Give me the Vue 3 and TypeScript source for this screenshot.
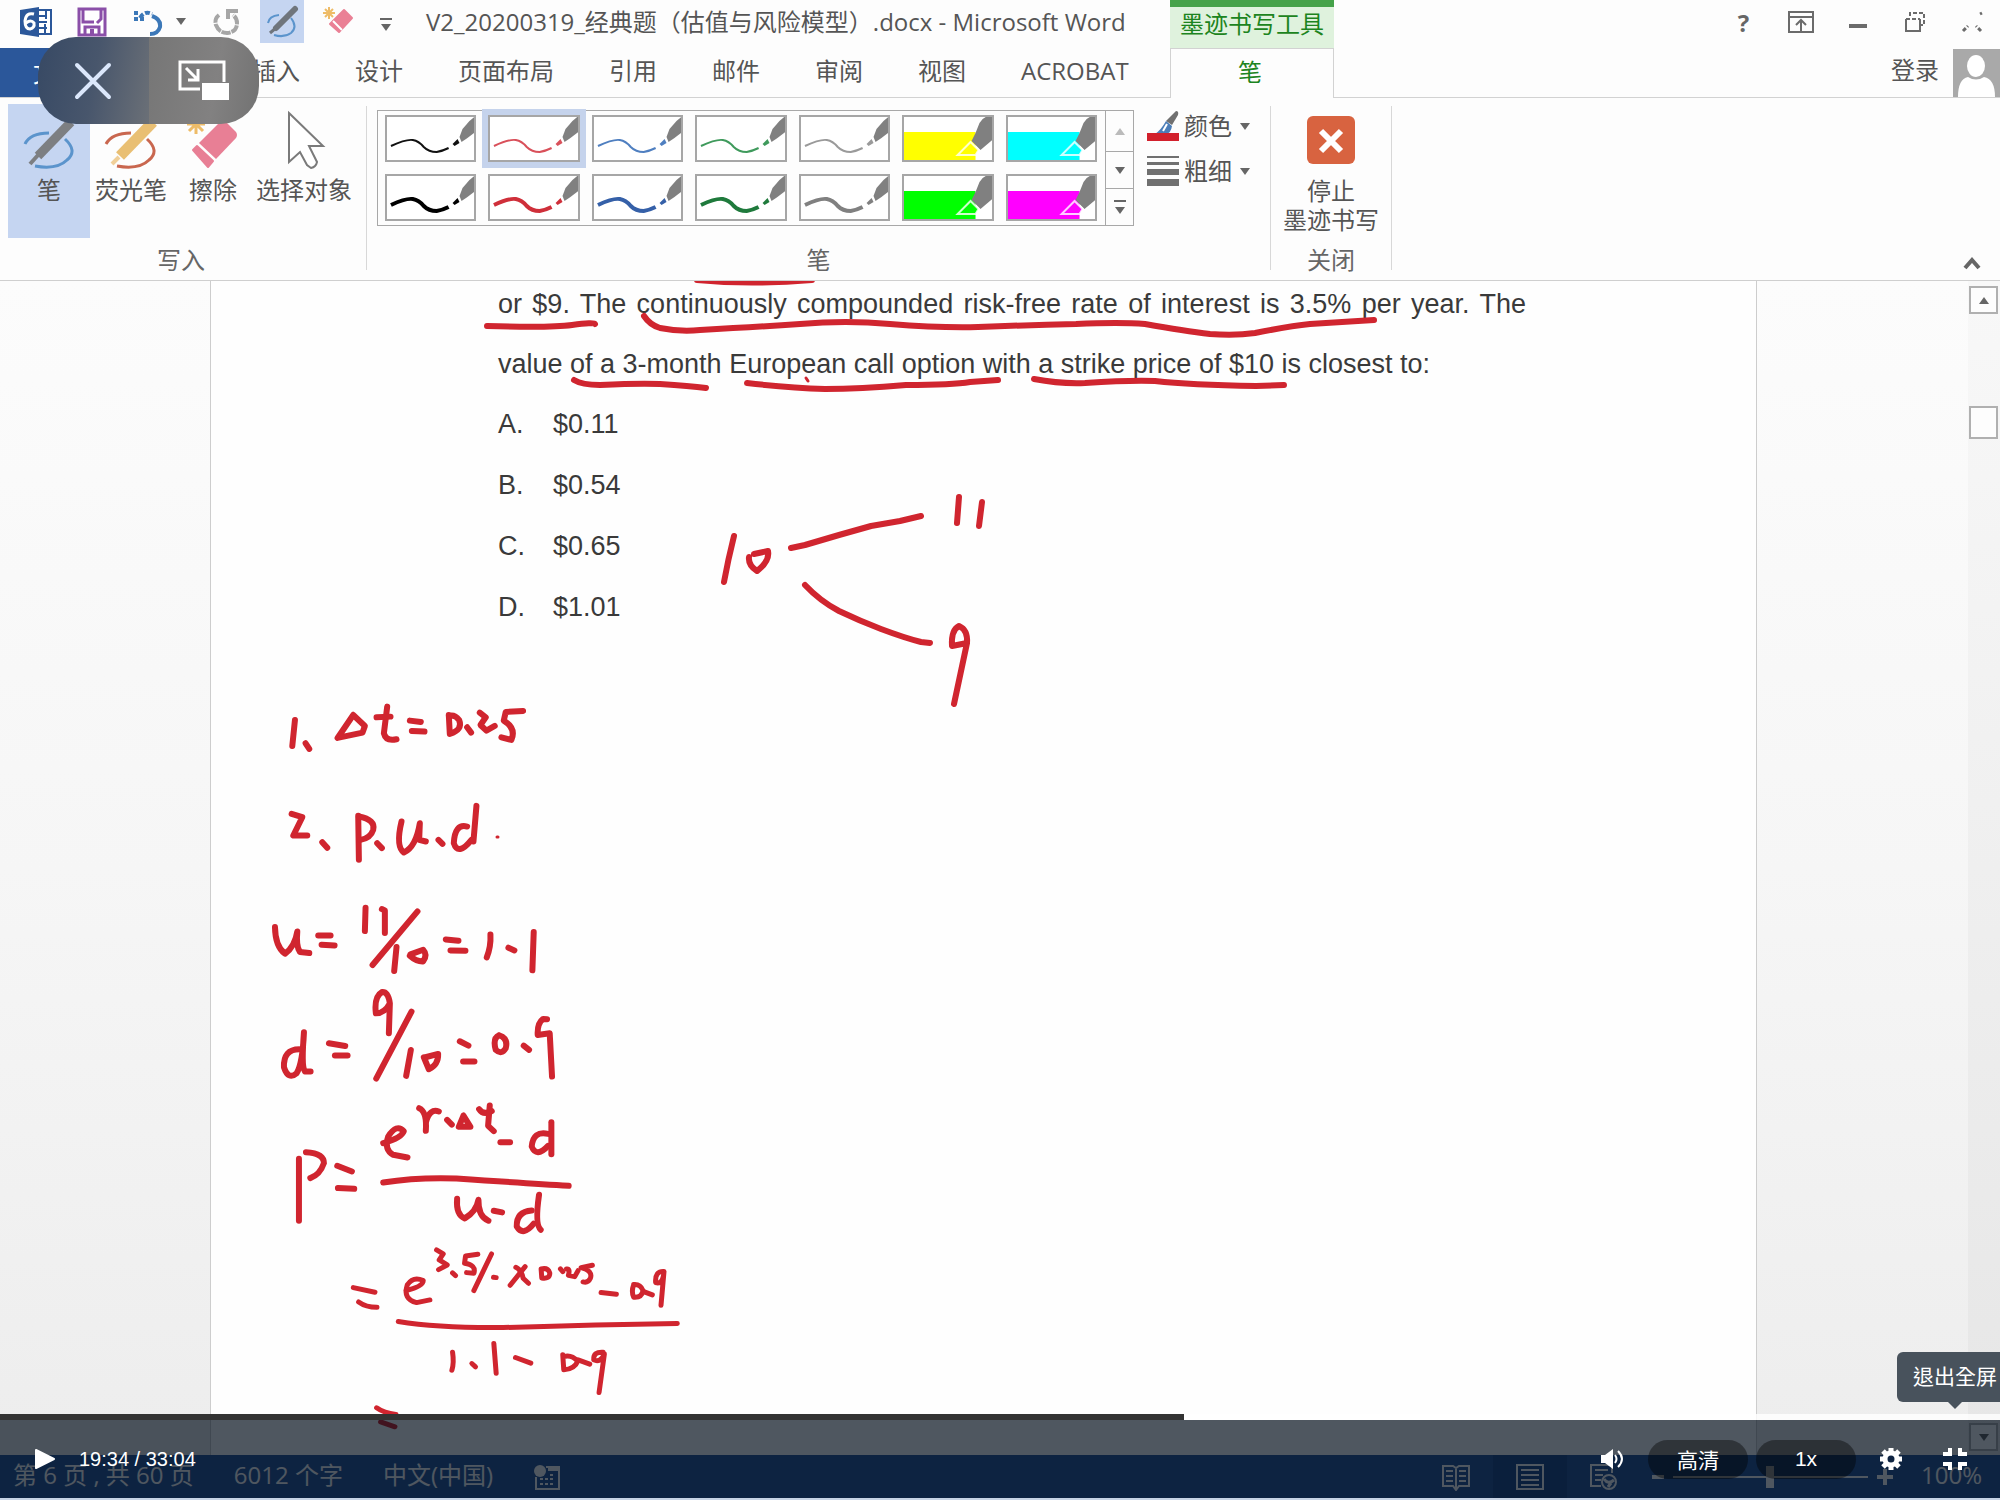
<script setup lang="ts">
import { ref } from 'vue'

interface Swatch { color: string; kind: 'thin' | 'thick' | 'marker' }
interface InkBlock { x: number; y: number; scale: number; width: number; strokes: string[] }

const tabs = ['开始', '插入', '设计', '页面布局', '引用', '邮件', '审阅', '视图', 'ACROBAT']

const swatches: Swatch[] = [
  { color: '#111111', kind: 'thin' },
  { color: '#d9505a', kind: 'thin' },
  { color: '#4f7fc0', kind: 'thin' },
  { color: '#3f9a5c', kind: 'thin' },
  { color: '#9a9a9a', kind: 'thin' },
  { color: '#ffff00', kind: 'marker' },
  { color: '#00ffff', kind: 'marker' },
  { color: '#000000', kind: 'thick' },
  { color: '#cf2f3a', kind: 'thick' },
  { color: '#3560a8', kind: 'thick' },
  { color: '#1f7a3c', kind: 'thick' },
  { color: '#808080', kind: 'thick' },
  { color: '#00ff00', kind: 'marker' },
  { color: '#ff00ff', kind: 'marker' },
]
const selected = ref(1)
const zoom = ref(100)

const options = [
  { key: 'A.', value: '$0.11' },
  { key: 'B.', value: '$0.54' },
  { key: 'C.', value: '$0.65' },
  { key: 'D.', value: '$1.01' },
]

const ink: InkBlock[] = [
  {
    x: 0, y: 0, scale: 1, width: 6,
    strokes: [
      'M697 280Q750 285 812 280',
      'M487 326Q550 328 572 325T595 324',
      'M644 316Q650 325 660 328Q680 332 700 330Q756 327 800 324Q846 320 890 324Q940 328 978 327Q1030 325 1076 324Q1120 322 1145 324Q1185 331 1210 334Q1235 336 1255 333Q1290 326 1310 324L1374 320',
      'M574 380Q582 385 600 385Q640 383 660 384Q690 386 706 388',
      'M747 383Q790 388 825 389Q860 389 906 385Q953 385 970 382L998 380',
      'M1034 379Q1060 384 1085 383Q1130 380 1155 381Q1190 385 1256 386L1284 385',
      'M791 548L805 545L839 535L871 526L900 521L921 516',
      'M805 585Q820 601 839 611Q860 621 881 629Q905 638 921 642L930 643',
      'M959 497L957 523', 'M982 502L979 526',
      'M734 536Q728 560 724 582',
      'M754 554L768 551Q770 561 757 571Q748 565 749 557',
      'M967 643L952 646Q951 630 959 626Q968 630 967 643L954 704',
    ],
  },
  { x: 0, y: 0, scale: 1, width: 3, strokes: ['M806 378L808 381', 'M497 837L498 837'] },
  {
    x: 250, y: 680, scale: 0.333, width: 18,
    strokes: [
      'M135 120L127 198', 'M167 190L178 207',
      'M310 105L263 174L338 158L345 138L310 105',
      'M412 80L402 160Q408 185 440 178', 'M380 112L422 110',
      'M480 122L513 126', 'M486 153L524 155',
      'M597 105L600 162Q640 150 628 120Q615 103 597 108', 'M652 142L664 158',
      'M690 98L708 112L692 135L710 152L735 138',
      'M820 93L768 96L762 122Q800 145 785 180L755 172',
      'M125 402L157 412L130 467L172 467', 'M217 487L232 504',
      'M325 408L327 540', 'M327 410Q378 420 370 450Q362 475 332 480', 'M382 490L396 505',
      'M455 425Q437 500 462 518Q498 502 510 430L508 480L528 485', 'M566 480L578 492',
      'M652 440Q615 430 612 490Q625 530 665 480', 'M680 378L671 485',
      'M75 742Q76 800 105 822Q135 800 142 755Q138 800 150 817L178 820',
      'M205 767L242 767', 'M215 795L254 797',
      'M347 684L345 754', 'M396 688L405 692L405 760', 'M503 695L368 856',
      'M440 802L433 874', 'M480 828Q500 846 520 845Q534 825 520 810L482 824',
      'M588 779L626 783', 'M602 812L647 813',
      'M722 764Q724 800 711 833', 'M776 804L794 812', 'M852 757L848 872',
    ],
  },
  {
    x: 250, y: 970, scale: 0.333, width: 18,
    strokes: [
      'M148 238Q100 238 102 292Q115 332 140 310Q158 280 162 187Q154 290 165 305L182 305',
      'M237 220L286 228', 'M255 257L293 257',
      'M420 100Q415 65 397 66Q372 80 378 130Q404 130 420 100L417 190',
      'M485 125L379 326', 'M483 240L469 318', 'M522 262L537 298Q566 285 565 252L527 262',
      'M630 214L656 227', 'M640 275L674 275',
      'M748 196Q728 205 738 240Q755 256 768 235Q776 205 748 196', 'M822 227L838 240',
      'M892 148L880 147Q862 160 864 195L900 190L907 320',
      'M147 567L147 753', 'M168 547Q222 550 222 580Q210 615 181 625',
      'M262 588L306 605', 'M264 655L313 657',
      'M400 520Q455 505 462 484Q440 460 415 500Q402 540 430 555L473 563',
      'M508 415Q532 425 528 483', 'M529 455Q540 415 567 425', 'M592 450L606 464',
      'M641 437L627 471L662 471Z', 'M688 418Q700 437 726 424', 'M720 407L715 468L732 484',
      'M752 517L781 517',
      'M895 492Q850 482 846 530Q860 565 895 528', 'M905 457L905 553',
      'M400 638Q500 622 620 626Q850 642 957 648',
      'M622 687Q618 735 645 746Q680 725 686 690Q685 740 716 753', 'M732 723L757 728',
      'M846 722Q800 725 801 770Q820 802 852 762', 'M868 675Q855 765 873 780',
    ],
  },
  {
    x: 330, y: 1220, scale: 0.333, width: 15,
    strokes: [
      'M70 203L135 217', 'M86 246Q108 262 141 262',
      'M228 212Q280 200 280 182Q250 168 232 195Q218 238 260 248L300 240',
      'M320 90L340 102L328 120L352 135L326 149', 'M368 159L377 167',
      'M444 103L407 108L404 130Q440 135 432 160L410 158',
      'M485 102L432 212', 'M491 172L499 173',
      'M558 142Q575 150 580 175L596 190', 'M586 140L541 196',
      'M634 147L636 174Q660 178 660 160Q655 142 634 147', 'M692 147L699 155',
      'M710 147Q722 145 716 166L735 170L745 152',
      'M788 136L754 143Q790 152 782 175Q775 190 760 186',
      'M814 218L860 223',
      'M912 194Q904 215 912 232Q936 234 940 212Q932 192 912 194', 'M942 215L968 225',
      'M1003 155Q975 153 978 188Q1000 195 1003 155L994 256',
      'M205 305Q330 325 520 323Q800 315 1043 311',
      'M368 397Q373 430 366 451', 'M426 431L437 441', 'M492 371L499 460',
      'M557 413L603 430',
      'M699 405L702 450Q735 448 744 424Q725 403 702 410', 'M745 420L780 433',
      'M820 397Q790 395 792 420Q812 430 824 402L808 518',
      'M140 564Q162 580 198 584', 'M152 606L195 621',
    ],
  },
]
</script>

<template>
  <main class="player">
    <section class="word">
      <header class="head">
        <div class="quick">
          <button class="q" aria-label="Word">
            <svg width="34" height="32" viewBox="0 0 34 32">
              <path d="M18 4h14v24H18" fill="#fff" stroke="#2b579a" stroke-width="2" />
              <path d="M20 10h8M20 16h8M20 22h8M27 5v8M26 18v9" stroke="#2b579a" stroke-width="2" />
              <path d="M1 4L20 1V31L1 28Z" fill="#2b579a" />
              <path d="M15 8Q7 6 6 15Q6 23 11 23Q16 22 15 17Q12 13 7 17" fill="none" stroke="#fff" stroke-width="3" />
            </svg>
          </button>
          <button class="q" aria-label="保存">
            <svg width="30" height="30" viewBox="0 0 30 30">
              <path d="M2 2H28V28H2Z" fill="#fff" stroke="#8a4fa8" stroke-width="3" />
              <path d="M6 3V15H17M24 3V12L20 16M8 28V20H22V28" fill="none" stroke="#8a4fa8" stroke-width="3" />
              <path d="M13 22h4v6h-4z" fill="#8a4fa8" />
            </svg>
          </button>
          <button class="q" aria-label="撤消">
            <svg width="30" height="30" viewBox="0 0 30 30" fill="none" stroke="#3c78b8" stroke-width="4">
              <path d="M3 4V12H12" stroke-dasharray="4 2" /><path d="M7 11Q12 3 19 7" stroke-dasharray="5 2" />
              <path d="M19 9Q28 12 27 20Q25 27 17 27" />
            </svg>
          </button>
          <button class="more" aria-label="撤消列表"><i class="tri"></i></button>
          <button class="q" aria-label="重复">
            <svg width="30" height="30" viewBox="0 0 30 30" fill="none" stroke="#a6a6a6" stroke-width="4">
              <path d="M8 8Q3 12 5 18Q8 26 16 26Q26 25 26 16Q26 11 22 8" stroke-dasharray="9 1" /><path d="M17 12V4H27" />
            </svg>
          </button>
          <button class="q on" aria-label="笔">
            <svg width="34" height="34" viewBox="0 0 34 34" fill="none">
              <path d="M3 18Q4 11 14 10M26 13Q33 22 26 28Q19 33 9 30" stroke="#5b94cc" stroke-width="2" />
              <path d="M11 23L30 4" stroke="#6f757c" stroke-width="6" stroke-linecap="round" /><path d="M5 28L12 22" stroke="#6f757c" stroke-width="3" />
            </svg>
          </button>
          <button class="q" aria-label="橡皮擦">
            <svg width="34" height="34" viewBox="0 0 34 34">
              <path d="M8 2V14M2 8H14M4 4L12 12M12 4L4 12" stroke="#eebc68" stroke-width="2" />
              <path d="M23 5L31 13L18 27L9 19Z" fill="#ea8095" stroke="#ea8095" stroke-width="2" stroke-linejoin="round" /><path d="M12 16L21 25" stroke="#fff" stroke-width="2" />
            </svg>
          </button>
          <button class="menu" aria-label="自定义"><i class="dash"></i><i class="tri"></i></button>
          <h1>V2_20200319_经典题（估值与风险模型）.docx - Microsoft Word</h1>
        </div>
        <div class="context">墨迹书写工具</div>
        <div class="window">
          <button aria-label="帮助"><b>?</b></button>
          <button aria-label="功能区显示选项">
            <svg width="26" height="22" viewBox="0 0 26 22" fill="none" stroke="#6b6b6b" stroke-width="2"><path d="M1 1H25V21H1ZM1 6H25M13 20V10M8 14L13 9L18 14" /></svg>
          </button>
          <button aria-label="最小化">
            <svg width="20" height="22" viewBox="0 0 20 22"><path d="M1 15H19" stroke="#6b6b6b" stroke-width="4" /></svg>
          </button>
          <button aria-label="还原">
            <svg width="22" height="22" viewBox="0 0 22 22" fill="none" stroke="#6b6b6b" stroke-width="2"><path d="M2 8V20H16V8" /><path d="M2 8H16M6 5V2H20V14H17" stroke-dasharray="4 2" /></svg>
          </button>
          <button aria-label="关闭">
            <svg width="22" height="22" viewBox="0 0 22 22" fill="none" stroke="#6b6b6b" stroke-width="3"><path d="M2 20L7 15M20 20L15 15M19 3L21 2" stroke-dasharray="4 2" /></svg>
          </button>
        </div>
        <nav class="tabs">
          <button class="file">文件</button>
          <button v-for="t in tabs" :key="t">{{ t }}</button>
        </nav>
        <button class="active">笔</button>
        <div class="account">
          <button>登录</button>
          <svg width="47" height="48" viewBox="0 0 47 48">
            <path d="M0 0H47V48H0Z" fill="#a9a9a9" />
            <ellipse cx="23" cy="17" rx="9" ry="11" fill="#fff" /><path d="M5 48Q5 30 15 28Q23 33 31 28Q42 30 42 48Z" fill="#fff" />
          </svg>
        </div>
      </header>

      <div class="ribbon">
        <section class="group write">
          <div class="tools">
            <button class="tool on">
              <svg width="56" height="60" viewBox="0 0 56 60" fill="none">
                <path d="M4 34Q9 23 28 23M44 29Q57 41 46 50Q36 60 14 56" stroke="#5b94cc" stroke-width="3" />
                <path d="M17 46L50 12" stroke="#7d7f82" stroke-width="9" /><path d="M9 54L18 44" stroke="#7d7f82" stroke-width="4" />
              </svg>
              笔
            </button>
            <button class="tool">
              <svg width="56" height="60" viewBox="0 0 56 60" fill="none">
                <path d="M3 34Q9 23 28 23M44 29Q57 41 46 50Q36 60 14 56" stroke="#c9674f" stroke-width="3" />
                <path d="M17 46L50 12" stroke="#e9bf73" stroke-width="11" /><path d="M9 54L16 47" stroke="#f0cf98" stroke-width="4" />
              </svg>
              荧光笔
            </button>
            <button class="tool">
              <svg width="56" height="60" viewBox="0 0 56 60">
                <path d="M11 6V24M2 14H20M4 21L18 7M4 7L18 21" stroke="#eebc68" stroke-width="3" />
                <path d="M35 12Q38 9 41 12L51 22Q53 25 51 28L31 49L14 33Z" fill="#e87f95" /><path d="M8 40L12 36L28 51L23 57Z" fill="#e87f95" stroke="#e87f95" stroke-width="2" stroke-linejoin="round" />
              </svg>
              擦除
            </button>
            <button class="tool wide">
              <svg width="56" height="60" viewBox="0 0 56 60">
                <path d="M13 3L47 36H33L41 52Q40 57 35 58L31 55L24 42L13 52Z" fill="#fff" stroke="#7a7a7a" stroke-width="2" />
              </svg>
              选择对象
            </button>
          </div>
          <h2>写入</h2>
        </section>
        <i class="rule"></i>
        <section class="group pens">
          <div class="pen-row">
            <div class="gallery">
              <div class="cells">
                <button v-for="(s, i) in swatches" :key="i" class="cell" :class="{ picked: i === selected }" :aria-label="s.kind" @click="selected = i">
                  <svg v-if="s.kind !== 'marker'" viewBox="1 1 88 43" preserveAspectRatio="none">
                    <path d="M5 30Q20 23 27 24Q33 25 38 31Q43 36 51 36Q57 35 63 32" fill="none" :stroke="s.color" :stroke-width="s.kind === 'thick' ? 4 : 2" />
                    <path d="M67 28L72 23L74 27L69 30Z" :fill="s.color" />
                    <path d="M74 21L77 13L84 5L90 0V16L82 22L76 26Z" fill="#808080" />
                  </svg>
                  <svg v-else viewBox="1 1 88 43" preserveAspectRatio="none">
                    <path d="M0 16H73V45H0Z" :fill="s.color" />
                    <path d="M77 7Q80 1 87 0H90V24L78 34L69 25L73 17Z" fill="#808080" />
                    <path d="M68 26L76 34L73 39H55Z" :fill="s.color" stroke="#fff" stroke-opacity="0.8" stroke-width="2" />
                  </svg>
                </button>
              </div>
              <div class="spin">
                <button class="off" aria-label="上一行"><i class="tri up"></i></button>
                <button aria-label="下一行"><i class="tri"></i></button>
                <button aria-label="其他"><i class="dash"></i><i class="tri"></i></button>
              </div>
            </div>
            <div class="props">
              <button>
                <svg width="34" height="32" viewBox="0 0 34 32"><path d="M30 1Q33 1 32 5L26 15L20 11Z" fill="#707070" /><path d="M20 11L26 16Q25 23 20 24H9Q15 20 20 11Z" fill="#4b7db8" /><path d="M21 14L17 21" stroke="#fff" stroke-width="2" /><path d="M1 23H33V31H1Z" fill="#d2202c" /></svg>
                颜色<i class="tri"></i>
              </button>
              <button>
                <svg width="34" height="32" viewBox="0 0 34 32"><path d="M1 1H33V3H1ZM1 7H33V10H1ZM1 14H33V20H1ZM1 24H33V31H1Z" fill="#707070" /></svg>
                粗细<i class="tri"></i>
              </button>
            </div>
          </div>
          <h2>笔</h2>
        </section>
        <i class="rule"></i>
        <section class="group stop">
          <button>
            <svg width="48" height="48" viewBox="0 0 48 48"><rect width="48" height="48" rx="6" fill="#d86340" /><path d="M14 15L34 35M34 15L14 35" stroke="#fff" stroke-width="6" /></svg>
            <span>停止<br />墨迹书写</span>
          </button>
          <h2>关闭</h2>
        </section>
        <i class="rule"></i>
        <button class="fold" aria-label="折叠功能区">
          <svg width="20" height="14" viewBox="0 0 20 14"><path d="M3 12L10 4L17 12" fill="none" stroke="#666" stroke-width="4" /></svg>
        </button>
      </div>

      <div class="desk">
        <article class="page">
          <p>or $9. The continuously compounded risk-free rate of interest is 3.5% per year. The value of a 3-month European call option with a strike price of $10 is closest to:</p>
          <ol>
            <li v-for="o in options" :key="o.key"><span>{{ o.key }}</span>{{ o.value }}</li>
          </ol>
          <svg class="ink" viewBox="211 281 1300 1170" width="1300" height="1170" role="img" aria-label="墨迹">
            <g v-for="(b, i) in ink" :key="i" :transform="`translate(${b.x} ${b.y}) scale(${b.scale})`" :stroke-width="b.width">
              <path v-for="(s, j) in b.strokes" :key="j" :d="s" />
            </g>
          </svg>
        </article>
        <div class="scroll">
          <button aria-label="向上滚动"><i class="tri up"></i></button>
          <i class="thumb"></i>
          <button class="end" aria-label="向下滚动"><i class="tri"></i></button>
        </div>
      </div>

      <footer class="status">
        <span>第 6 页 , 共 60 页</span>
        <span>6012 个字</span>
        <span>中文(中国)</span>
        <svg width="28" height="28" viewBox="0 0 28 28"><circle cx="7" cy="8" r="6" fill="#fff" /><path d="M13 4H26V26H3V14" fill="none" stroke="#fff" stroke-width="2" /><path d="M15 3H26V8H15ZM7 15h3v2H7zM12 15h3v2h-3zM17 15h3v2h-3zM7 20h3v2H7zM12 20h3v2h-3zM17 20h3v2h-3zM17 11h3v2h-3z" fill="#fff" /></svg>
        <div class="views">
          <button aria-label="阅读视图">
            <svg width="28" height="28" viewBox="0 0 28 28" fill="none" stroke="#fff" stroke-width="2"><path d="M1 3H11L14 5L17 3H27V23H17L14 27L11 23H1ZM14 5V26M4 8h7M4 13h7M4 18h7M17 8h7M17 13h7M17 18h7" /></svg>
          </button>
          <button class="on" aria-label="页面视图">
            <svg width="28" height="28" viewBox="0 0 28 28" fill="none" stroke="#fff" stroke-width="2"><path d="M1 2H27V26H1ZM5 7H23M5 12H23M5 17H23M5 22H23" /></svg>
          </button>
          <button aria-label="Web 版式视图">
            <svg width="28" height="28" viewBox="0 0 28 28" fill="none" stroke="#fff" stroke-width="2"><path d="M11 23H1V2H22V10M5 7H18M5 12H13M5 17H11" /><circle cx="19" cy="19" r="7" /><path d="M14 16Q18 22 24 17M18 24L21 20" stroke-width="3" /></svg>
          </button>
        </div>
        <div class="zoom">
          <button aria-label="缩小"><svg width="14" height="16" viewBox="0 0 14 16"><path d="M1 8H13" stroke="#fff" stroke-width="4" /></svg></button>
          <input v-model.number="zoom" type="range" min="0" max="200" aria-label="缩放" />
          <button aria-label="放大"><svg width="18" height="16" viewBox="0 0 18 16"><path d="M1 8H17M9 0V16" stroke="#fff" stroke-width="4" /></svg></button>
          <span>100%</span>
        </div>
      </footer>
    </section>

    <div class="float">
      <button aria-label="关闭"><svg width="40" height="40" viewBox="0 0 40 40"><path d="M4 4L36 36M36 4L4 36" stroke="#dbe7fb" stroke-width="4" stroke-linecap="round" /></svg></button>
      <button aria-label="画中画">
        <svg width="52" height="42" viewBox="0 0 52 42"><path d="M22 29H2V2H46V22" fill="none" stroke="#fff" stroke-width="3" /><path d="M8 8L19 19M20 9V20H10" fill="none" stroke="#fff" stroke-width="3" /><path d="M24 23H51V40H24Z" fill="#fff" /></svg>
      </button>
    </div>

    <div class="video">
      <div class="progress"><i></i></div>
      <div class="bar">
        <button class="play" aria-label="播放"><svg width="22" height="22" viewBox="0 0 22 22"><path d="M2 2L20 11L2 20Z" fill="#fff" stroke="#fff" stroke-width="2" stroke-linejoin="round" /></svg></button>
        <span class="time">19:34 / 33:04</span>
        <button class="icon" aria-label="音量">
          <svg width="26" height="22" viewBox="0 0 26 22"><path d="M1 7H5L13 1V21L5 15H1Z" fill="#fff" /><path d="M15 7Q18 11 15 15M18 3Q26 11 18 19" fill="none" stroke="#fff" stroke-width="2" /></svg>
        </button>
        <button class="chip">高清</button>
        <button class="chip">1x</button>
        <button class="icon gear" aria-label="设置">
          <svg width="22" height="22" viewBox="0 0 22 22"><circle cx="11" cy="11" r="6" fill="none" stroke="#fff" stroke-width="5" /><path d="M11 0V4M11 18V22M0 11H4M18 11H22M3 3L6 6M16 16L19 19M19 3L16 6M6 16L3 19" stroke="#fff" stroke-width="5" /></svg>
        </button>
        <div class="exit">
          <button class="icon" aria-label="退出全屏">
            <svg width="26" height="22" viewBox="0 0 26 22"><path d="M8 0V6H1M18 0V6H25M8 22V16H1M18 22V16H25" fill="none" stroke="#fff" stroke-width="4" /></svg>
          </button>
          <div class="tip" role="tooltip">退出全屏</div>
        </div>
      </div>
    </div>
  </main>
</template>

<style>
body { margin: 0; background: #c6d3e4; }
</style>

<style scoped>
* { box-sizing: border-box; }
button { border: 0; padding: 0; margin: 0; background: none; color: inherit; font: inherit; }
svg { display: block; flex: none; }
h1, h2, p, ol { margin: 0; padding: 0; font-weight: 400; }
.player { position: relative; overflow: hidden; font-family: "Open Sans", "Noto Sans CJK SC", sans-serif; font-size: 24px; color: #555; }
.word { display: flex; flex-direction: column; min-height: 100vh; padding-bottom: 2px; background: #c6d3e4; }

.head { display: grid; grid-template-columns: 1170px 164px 1fr; grid-template-rows: 48px 50px; background: #fdfdfd; }
.quick { display: flex; align-items: center; gap: 12px; padding-left: 14px; }
.q { width: 44px; height: 43px; align-self: flex-start; display: flex; align-items: center; justify-content: center; }
.q.on { background: #c5d5f1; }
.more { width: 22px; height: 43px; margin-left: -12px; align-self: flex-start; display: grid; place-items: center; }
.menu { width: 28px; display: grid; justify-items: center; gap: 4px; }
.tri { display: block; border: 5px solid transparent; border-top: 7px solid #666; border-bottom: 0; }
.tri.up { border-top: 0; border-bottom: 7px solid #666; }
.dash { display: block; width: 12px; height: 2px; background: #666; }
h1 { margin-left: 14px; font-size: 24px; line-height: 44px; white-space: nowrap; align-self: flex-start; }
.context { border-top: 7px solid #45a249; background: #dff2dd; color: #1c8420; line-height: 34px; text-align: center; white-space: nowrap; }
.window { display: flex; justify-content: flex-end; height: 44px; }
.window button { width: 57px; display: grid; place-items: center; color: #666; }
.tabs { display: flex; gap: 55px; border-bottom: 1px solid #d2d2d2; white-space: nowrap; line-height: 46px; }
.tabs button { height: 46px; }
.tabs .file { width: 122px; height: 49px; margin-right: -28px; padding-left: 33px; text-align: left; background: #2b579a; color: #fff; }
.active { border: 1px solid #d2d2d2; border-bottom: 0; color: #1c8420; padding: 0 4px 6px 0; }
.account { display: flex; justify-content: flex-end; align-items: center; gap: 14px; border-bottom: 1px solid #d2d2d2; }
.account button { padding-bottom: 8px; }

.ribbon { display: flex; height: 183px; background: #fdfdfd; border-bottom: 1px solid #cfcfcf; }
.group { display: flex; flex-direction: column; justify-content: space-between; padding-bottom: 8px; white-space: nowrap; }
.group h2 { font-size: 24px; line-height: 24px; text-align: center; color: #666; }
.rule { width: 1px; margin: 8px 0 10px; background: #d8d8d8; }
.write { width: 366px; padding-right: 4px; }
.tools { display: flex; padding: 6px 0 0 8px; }
.tool { width: 82px; height: 134px; padding-top: 6px; display: flex; flex-direction: column; align-items: center; gap: 4px; line-height: 32px; }
.tool.on { background: #c5d5f1; }
.tool.wide { width: 100px; }
.pens { width: 903px; padding-left: 10px; padding-right: 10px; }
.pen-row { display: flex; gap: 12px; padding-top: 12px; }
.gallery { width: 757px; height: 116px; display: flex; border: 1px solid #a8a8a8; }
.cells { flex: 1; display: grid; grid-template-columns: repeat(7, 1fr); grid-template-rows: 47px 47px; column-gap: 12px; row-gap: 12px; padding: 4px 8px 4px 7px; }
.cell { display: block; border: 2px solid #a6a6a6; background: #fff; min-width: 0; }
.cell svg { width: 100%; height: 43px; }
.cell.picked { box-shadow: 0 0 0 6px #c5d3ec; }
.spin { width: 28px; display: grid; grid-template-rows: 41px 37px 1fr; border-left: 1px solid #a8a8a8; }
.spin button { display: grid; place-content: center; justify-items: center; gap: 5px; border-bottom: 1px solid #a8a8a8; }
.spin button:last-child { border-bottom: 0; }
.spin .off { color: #bbb; }
.spin .off .tri { border-bottom-color: #bbb; }
.props { display: grid; grid-auto-rows: 32px; gap: 13px; align-content: start; }
.props button { display: flex; align-items: center; gap: 4px; line-height: 32px; }
.props .tri { margin-left: 4px; }
.stop { width: 120px; align-items: center; }
.stop button { padding-top: 18px; display: grid; justify-items: center; gap: 12px; line-height: 29px; }
.fold { margin-left: auto; align-self: flex-end; padding: 0 18px 10px 0; }

.desk { flex: 1; display: flex; background: linear-gradient(#fcfcfc, #f6f6f6 50%, #ededed); overflow: hidden; }
.page { position: relative; flex: 1; margin-left: 210px; margin-right: 211px; padding-left: 287px; background: #fefefe; border: solid #cdcdcd; border-width: 0 1px; font-family: "Liberation Sans", Arial, sans-serif; font-size: 27px; line-height: 60px; color: #3a3a3a; min-height: 1174px; }
.page p { width: 1028px; text-align: justify; margin-top: -7px; }
.page ol { list-style: none; display: grid; gap: 1px; }
.page li { display: flex; }
.page li span { width: 55px; }
.ink { position: absolute; left: 0; top: 0; fill: none; stroke: #d0252f; stroke-linecap: round; stroke-linejoin: round; }
.scroll { width: 32px; display: flex; flex-direction: column; align-items: center; padding: 5px 2px 4px 1px; background: linear-gradient(#f8f8f8, #e6e6e6); }
.scroll button, .thumb { width: 29px; height: 28px; border: 2px solid #b0b0b0; background: #fdfdfd; display: grid; place-items: center; }
.thumb { height: 33px; margin-top: 92px; }
.scroll .end { margin-top: auto; }

.status { height: 43px; display: flex; align-items: center; padding-left: 13px; background: #2b579a; color: #fff; font-size: 24px; line-height: 40px; white-space: nowrap; }
.status > span { margin-right: 40px; padding-bottom: 3px; }
.views { margin-left: auto; display: flex; height: 43px; }
.views button { width: 74px; display: grid; place-items: center; }
.views .on { background: #204b8c; }
.zoom { display: flex; align-items: center; gap: 8px; margin-left: 10px; padding-right: 18px; }
.zoom input { width: 195px; height: 22px; margin: 0; appearance: none; background: linear-gradient(#fff, #fff) center / 100% 2px no-repeat; }
.zoom input::-webkit-slider-thumb { appearance: none; width: 8px; height: 22px; background: #fff; }
.zoom span { margin-left: 19px; padding-bottom: 3px; }

.float { position: absolute; left: 38px; top: 37px; width: 221px; height: 87px; display: flex; border-radius: 38px; overflow: hidden; }
.float button { flex: 1; display: grid; place-items: center; background: linear-gradient(100deg, #374964, #48566c 50%, #6b7077); }
.float button + button { background: linear-gradient(100deg, #767676, #828181 60%, #727272); }

.video { position: absolute; left: 0; right: 0; bottom: 2px; font-family: "Liberation Sans", "Noto Sans CJK TC", sans-serif; font-size: 21px; color: #fff; }
.progress { height: 6px; background: rgba(255, 255, 255, 0.8); }
.progress i { display: block; width: 59.2%; height: 6px; background: #333; }
.bar { height: 78px; display: flex; align-items: center; padding: 0 30px 0 34px; background: rgba(0, 11, 24, 0.69); }
.time { margin: 0 auto 0 23px; font-size: 20px; }
.chip { width: 100px; height: 39px; margin-left: 8px; border-radius: 20px; background: rgba(0, 0, 0, 0.4); }
.icon { display: grid; place-items: center; width: 30px; height: 30px; }
.icon + .chip { margin-left: 20px; }
.gear { margin: 0 34px 0 20px; }
.exit { position: relative; }
.tip { position: absolute; left: 50%; bottom: 72px; width: 116px; margin-left: -58px; line-height: 50px; border-radius: 6px; background: #48525c; text-align: center; white-space: nowrap; }
.tip::after { content: ""; position: absolute; left: 51px; top: 50px; border: 7px solid transparent; border-top-color: #48525c; border-bottom: 0; }
</style>
